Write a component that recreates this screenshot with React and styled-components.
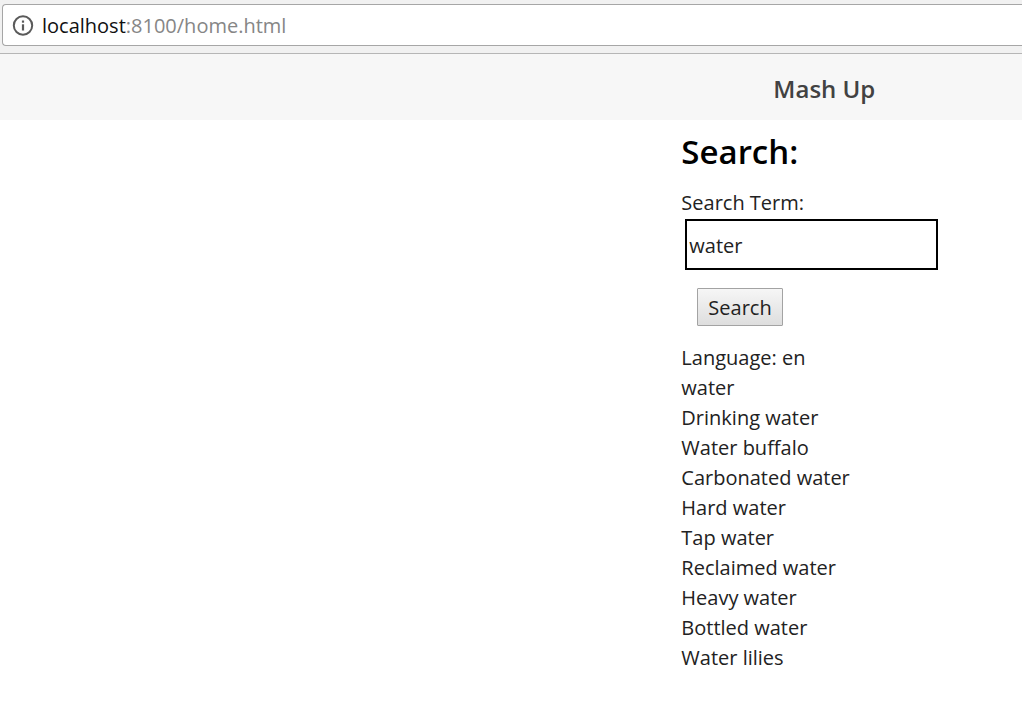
import React, { useState } from "react";
import styled, { createGlobalStyle } from "styled-components";

const GlobalStyle = createGlobalStyle`
  *, *::before, *::after { box-sizing: border-box; }
  body {
    margin: 0;
    background: #fff;
    color: #222;
    font-family: "Segoe UI", "Open Sans", "Noto Sans", sans-serif;
    font-size: 20px;
    font-variant-ligatures: none;
    line-height: 30px;
  }
`;

const BrowserBar = styled.div`
  padding: 4px 0 7px 2px;
  background: #f1f1f1;
  border-bottom: 1px solid #b6b6b6;
`;

const AddressBox = styled.div`
  display: flex;
  align-items: center;
  gap: 8px;
  height: 42px;
  padding: 2px 9px 0;
  background: #fff;
  border: 1px solid #a6a6a6;
  border-right: 0;
  border-radius: 4px 0 0 4px;
`;

const InfoIcon = styled.svg`
  flex: none;
  width: 22px;
  height: 22px;
`;

const Address = styled.span`
  color: #868686;
`;

const Host = styled.span`
  color: #111;
`;

const Header = styled.header`
  display: grid;
  grid-template-columns: 2fr 1fr;
  align-items: center;
  height: 66px;
  padding-top: 4px;
  background: #f7f7f7;
`;

const Title = styled.h1`
  grid-column: 2;
  max-width: 286px;
  margin: 0;
  color: #424242;
  font-size: 24px;
  font-weight: 600;
  line-height: 32px;
  text-align: center;
`;

const Main = styled.main`
  display: grid;
  grid-template-columns: 2fr 1fr;
  padding-top: 8px;
`;

const Column = styled.div`
  grid-column: 2;
`;

const Heading = styled.h2`
  margin: 0 0 12px;
  color: #000;
  font-size: 33px;
  font-weight: 600;
  line-height: 48px;
`;

const Form = styled.form`
  display: flex;
  flex-direction: column;
  align-items: flex-start;
`;

const Label = styled.label`
  display: block;
`;

const TextInput = styled.input`
  width: 253px;
  max-width: 100%;
  height: 51px;
  margin: 1px 0 0 4px;
  padding: 4px 2px 2px;
  background: #fff;
  border: 2px solid #000;
  border-radius: 0;
  color: inherit;
  font: inherit;
  outline: none;
`;

const SubmitButton = styled.button`
  height: 38px;
  margin: 18px 0 17px 16px;
  padding: 2px 10px 0;
  background: linear-gradient(#f6f6f6, #dedede);
  border: 1px solid #a3a3a3;
  border-radius: 1px;
  color: inherit;
  font: inherit;
`;

const Results = styled.ul`
  margin: 0;
  padding: 0;
  list-style: none;
`;

const results = [
  "water",
  "Drinking water",
  "Water buffalo",
  "Carbonated water",
  "Hard water",
  "Tap water",
  "Reclaimed water",
  "Heavy water",
  "Bottled water",
  "Water lilies",
];

export default function App() {
  const [term, setTerm] = useState("water");

  return (
    <>
      <GlobalStyle />
      <BrowserBar>
        <AddressBox>
          <InfoIcon viewBox="0 0 22 22" aria-hidden="true">
            <circle cx="11" cy="10.5" r="9.2" fill="none" stroke="#5a5a5a" strokeWidth="2" />
            <rect x="9.9" y="5.5" width="2.2" height="2.2" fill="#5a5a5a" />
            <rect x="9.9" y="9.3" width="2.2" height="6.2" fill="#5a5a5a" />
          </InfoIcon>
          <Address>
            <Host>localhost</Host>:8100/home.html
          </Address>
        </AddressBox>
      </BrowserBar>
      <Header>
        <Title>Mash Up</Title>
      </Header>
      <Main>
        <Column>
          <Heading>Search:</Heading>
          <Form onSubmit={(event) => event.preventDefault()}>
            <Label htmlFor="term">Search Term:</Label>
            <TextInput
              id="term"
              type="text"
              value={term}
              onChange={(event) => setTerm(event.target.value)}
            />
            <SubmitButton type="submit">Search</SubmitButton>
          </Form>
          <div>Language: en</div>
          <Results>
            {results.map((name) => (
              <li key={name}>{name}</li>
            ))}
          </Results>
        </Column>
      </Main>
    </>
  );
}
